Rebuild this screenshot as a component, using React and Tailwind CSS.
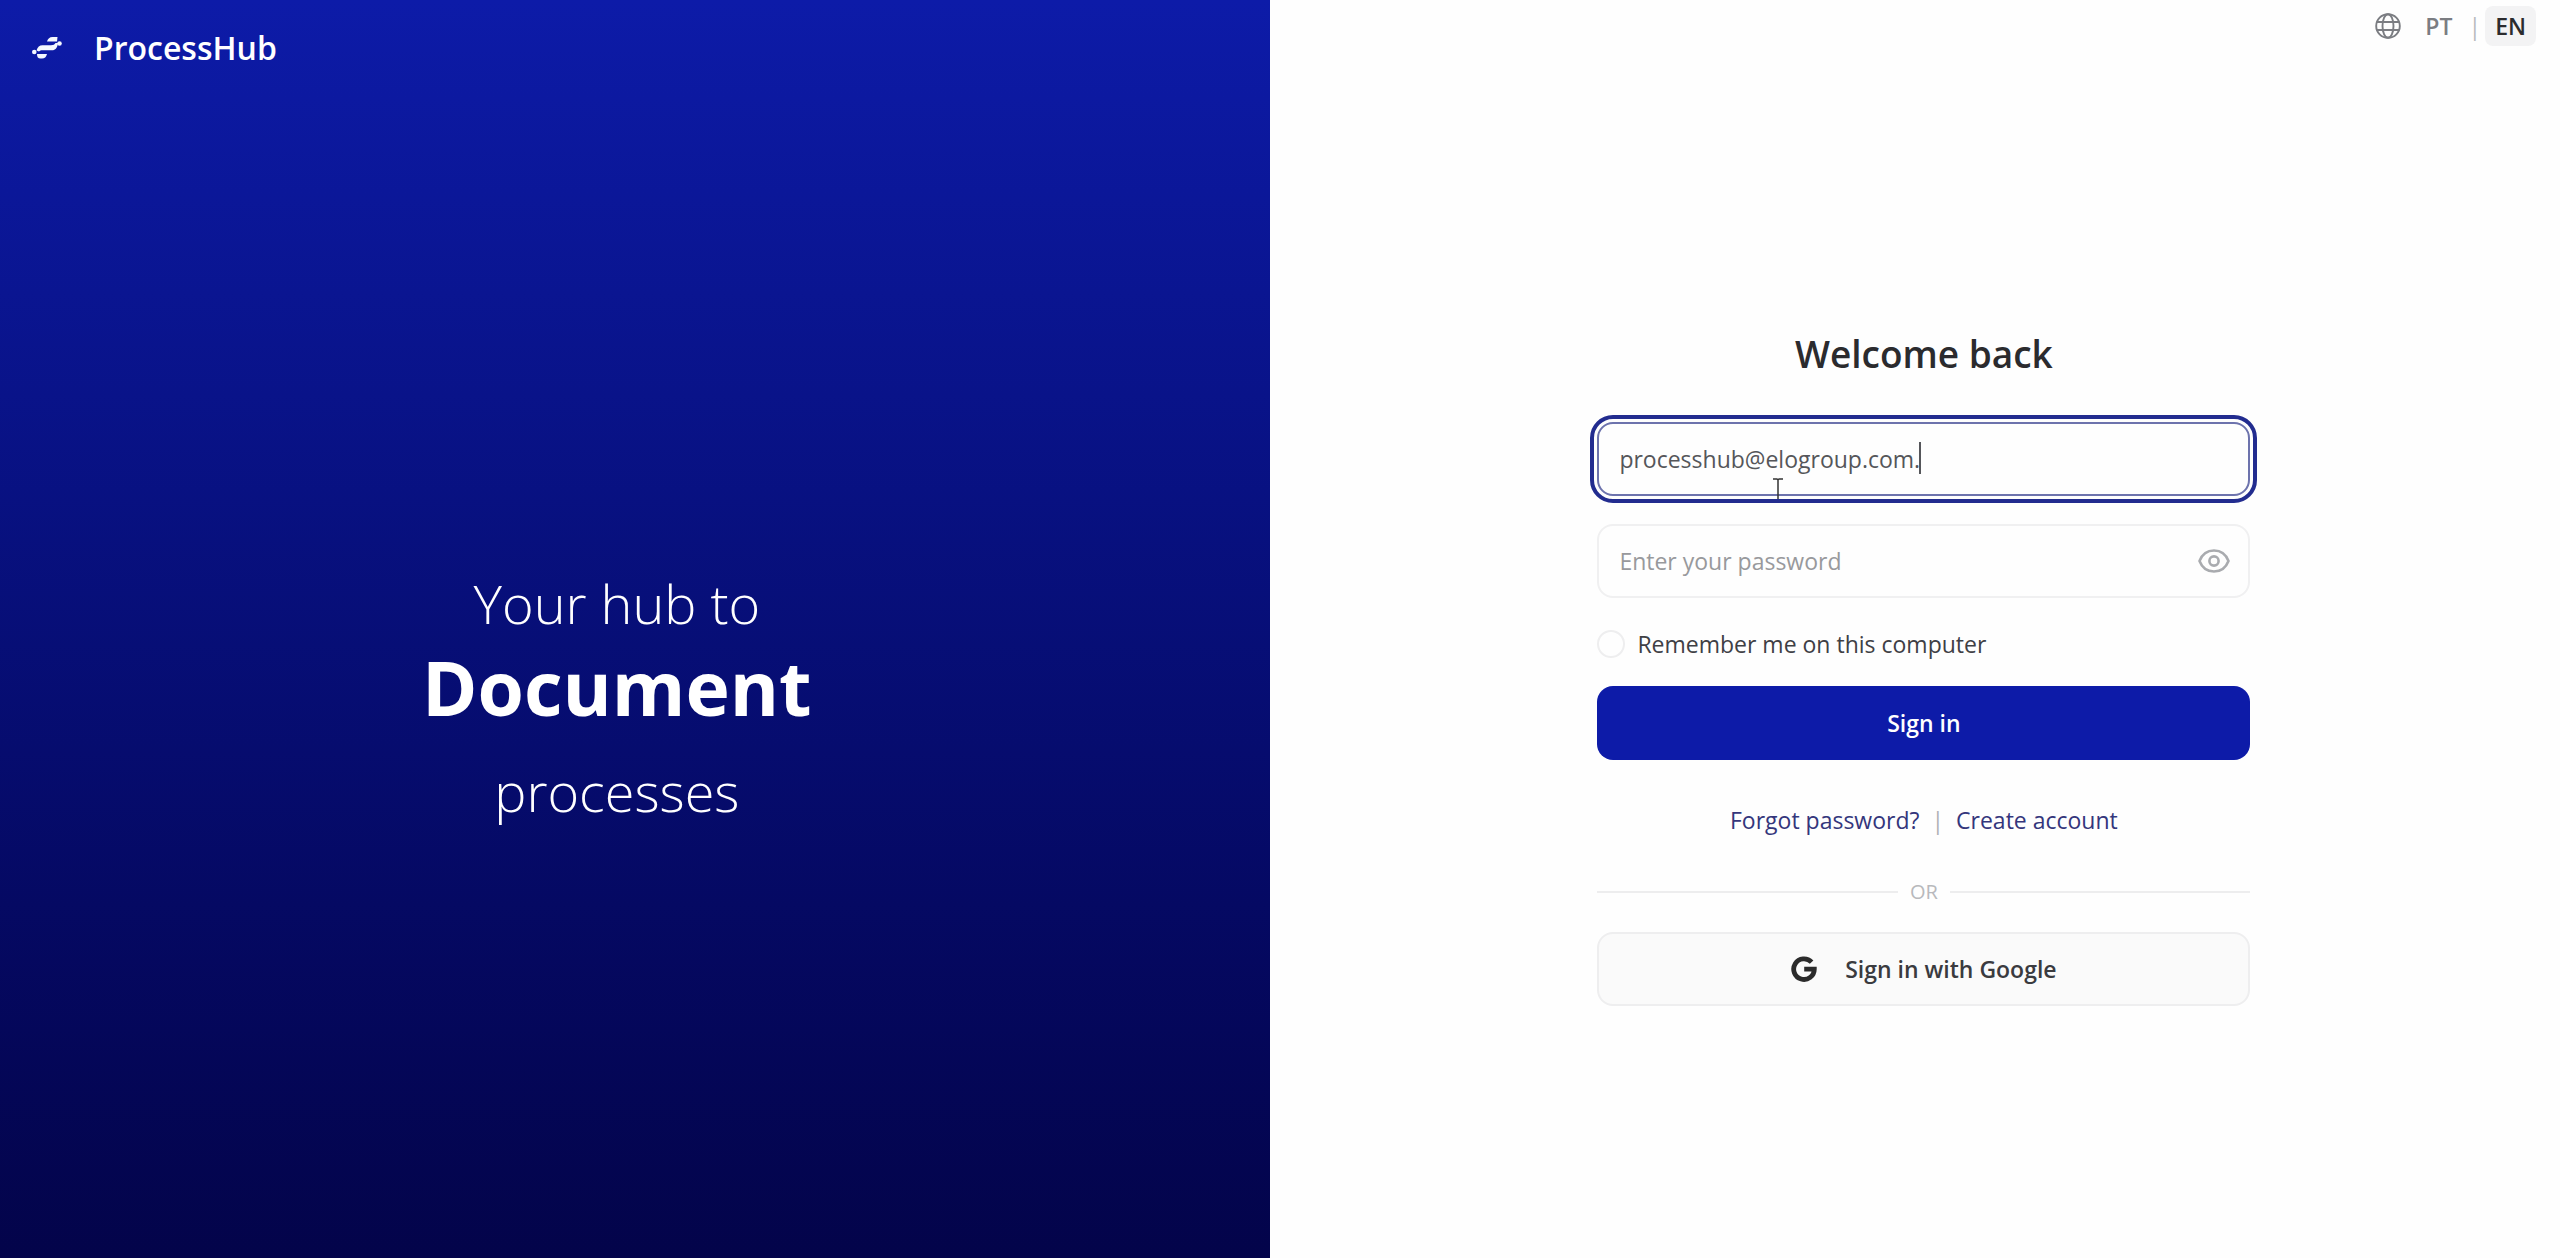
import React, { useState } from 'react';

function Logo() {
    return (
        <svg width="30" height="22" viewBox="0 0 30 22" fill="#f4f8ff" aria-hidden="true">
            <path d="M15 4.500C16 1.500 17.500 0 20.500 0h5l-.5 4.500z" />
            <path d="M4.500 13.500c1-3.700 3-5.300 6-5.300h8.500c2.500 0 3.500-.7 4.500-2.200h2.500c-.7 5-2.500 7.300-6 7.300h-9c-2.500 0-3 .3-4 1.200z" />
            <path d="M5 17h10c-.8 3-2.300 4.500-5 4.500H8.500c-2.500 0-3.500-1.500-3.500-4.500z" />
            <circle cx="27.500" cy="6.500" r="2.300" />
            <circle cx="2.300" cy="15" r="2.300" />
        </svg>
    );
}

function GlobeIcon() {
    return (
        <svg width="26" height="26" viewBox="0 0 26 26" fill="none" stroke="#7b7d82" strokeWidth="1.900" aria-hidden="true">
            <circle cx="13" cy="13" r="11.800" />
            <ellipse cx="13" cy="13" rx="5.500" ry="11.800" />
            <path d="M1.800 9h22.400M1.800 17h22.400" />
        </svg>
    );
}

function EyeIcon() {
    return (
        <svg width="32" height="24" viewBox="0 0 32 24" fill="none" stroke="#a9abaf" strokeWidth="2.600" strokeLinejoin="round" aria-hidden="true">
            <path d="M1.500 12C4 5.500 9.500 1.500 16 1.500S28 5.500 30.500 12C28 18.500 22.500 22.500 16 22.500S4 18.500 1.500 12z" />
            <circle cx="16" cy="12" r="4.600" />
        </svg>
    );
}

function GoogleIcon() {
    return (
        <svg width="26" height="26" viewBox="0 0 26 26" fill="none" stroke="#2b2b2b" strokeWidth="4.800" aria-hidden="true">
            <path d="M20.600 6.200A10.300 10.300 0 1 0 23.300 13.200H13.200" />
        </svg>
    );
}

function TextCursor() {
    return (
        <svg width="10" height="21" viewBox="0 0 10 21" fill="none" stroke="#333" strokeWidth="1.500" aria-hidden="true">
            <path d="M0 1h4l1 1 1-1h4M5 2v19" />
        </svg>
    );
}

export default function App() {
    const [email, setEmail] = useState('processhub@elogroup.com.');
    const [password, setPassword] = useState('');
    const [showPassword, setShowPassword] = useState(false);
    const [remember, setRemember] = useState(false);

    return (
        <div className="flex min-h-screen bg-[#fefefe] font-['Open_Sans','Noto_Sans',sans-serif] text-[#2b2b2e]">
            <section className="flex w-[49.6%] flex-col bg-linear-to-b from-[#0d1ba8] to-[#03044a] text-white">
                <header className="flex items-center gap-8 px-8 pt-6">
                    <Logo />
                    <span className="text-[32px] leading-12 font-semibold">ProcessHub</span>
                </header>
                <h1 className="flex grow flex-col items-center justify-center pt-21 pr-9 text-center font-light">
                    <span className="text-[54px] leading-18">Your hub to</span>
                    <strong className="text-[75px] leading-24 font-bold">Document</strong>
                    <span className="text-[54px] leading-28">processes</span>
                </h1>
            </section>

            <main className="flex grow flex-col pl-[18px]">
                <nav className="flex items-center justify-end pt-1.5 pr-6 text-[23px] leading-10 font-semibold text-[#7b7d82]">
                    <GlobeIcon />
                    <button type="button" className="pr-4 pl-6">PT</button>
                    <span className="pr-1 font-normal text-[#b8babd]">|</span>
                    <button type="button" className="rounded-lg bg-[#f3f3f4] px-2.5 text-[#2b2b2e]">EN</button>
                </nav>

                <form className="mx-auto flex w-full max-w-[653px] grow flex-col justify-center pt-7" onSubmit={(e) => e.preventDefault()}>
                    <h2 className="text-center text-[37px] leading-14 font-semibold">Welcome back</h2>

                    <div className="relative mt-10 text-[23px]">
                        <input
                            type="text"
                            aria-label="Email"
                            className="block h-[74px] w-full rounded-2xl border-2 border-[#6d73ad] px-5 text-[#55565a] caret-transparent outline-4 outline-offset-3 outline-[#222c8f]"
                            value={email}
                            onChange={(e) => setEmail(e.target.value)}
                        />
                        <span className="pointer-events-none absolute top-5 left-[322px] h-8 w-0.5 bg-[#55565a]" />
                        <span className="pointer-events-none absolute top-14 left-[176px]">
                            <TextCursor />
                        </span>
                    </div>

                    <div className="relative mt-7 text-[23px]">
                        <input
                            type={showPassword ? 'text' : 'password'}
                            aria-label="Password"
                            className="block h-[74px] w-full rounded-2xl border-2 border-[#f0f0f1] px-5 pr-16 outline-none placeholder:text-[#98999c]"
                            placeholder="Enter your password"
                            value={password}
                            onChange={(e) => setPassword(e.target.value)}
                        />
                        <button
                            type="button"
                            aria-label="Show password"
                            className="absolute inset-y-0 right-5 flex items-center"
                            onClick={() => setShowPassword(!showPassword)}
                        >
                            <EyeIcon />
                        </button>
                    </div>

                    <label className="mt-7 flex items-center gap-3 text-[23px] leading-9 text-[#3f4045]">
                        <input
                            type="checkbox"
                            className="size-7 appearance-none rounded-full border-2 border-[#eeeeef] checked:bg-[#0d1ba8]"
                            checked={remember}
                            onChange={(e) => setRemember(e.target.checked)}
                        />
                        Remember me on this computer
                    </label>

                    <button type="submit" className="mt-6 h-[74px] rounded-2xl bg-[#0d1ba8] text-[23px] font-semibold text-white">
                        Sign in
                    </button>

                    <div className="mt-10 flex justify-center gap-3 text-[23px] leading-10 text-[#34367c]">
                        <a href="#forgot">Forgot password?</a>
                        <span className="text-[#b0b1b5]">|</span>
                        <a href="#register">Create account</a>
                    </div>

                    <div className="mt-8 flex items-center gap-3 text-[20px] leading-10 text-[#b8b9bc]">
                        <span className="h-0.5 grow bg-[#ededee]" />
                        OR
                        <span className="h-0.5 grow bg-[#ededee]" />
                    </div>

                    <button
                        type="button"
                        className="mt-5 flex h-[74px] items-center justify-center gap-7 rounded-2xl border-2 border-[#eeeeef] bg-[#fafafa] text-[23px] font-semibold text-[#3a3b3f]"
                    >
                        <GoogleIcon />
                        Sign in with Google
                    </button>
                </form>
            </main>
        </div>
    );
}
